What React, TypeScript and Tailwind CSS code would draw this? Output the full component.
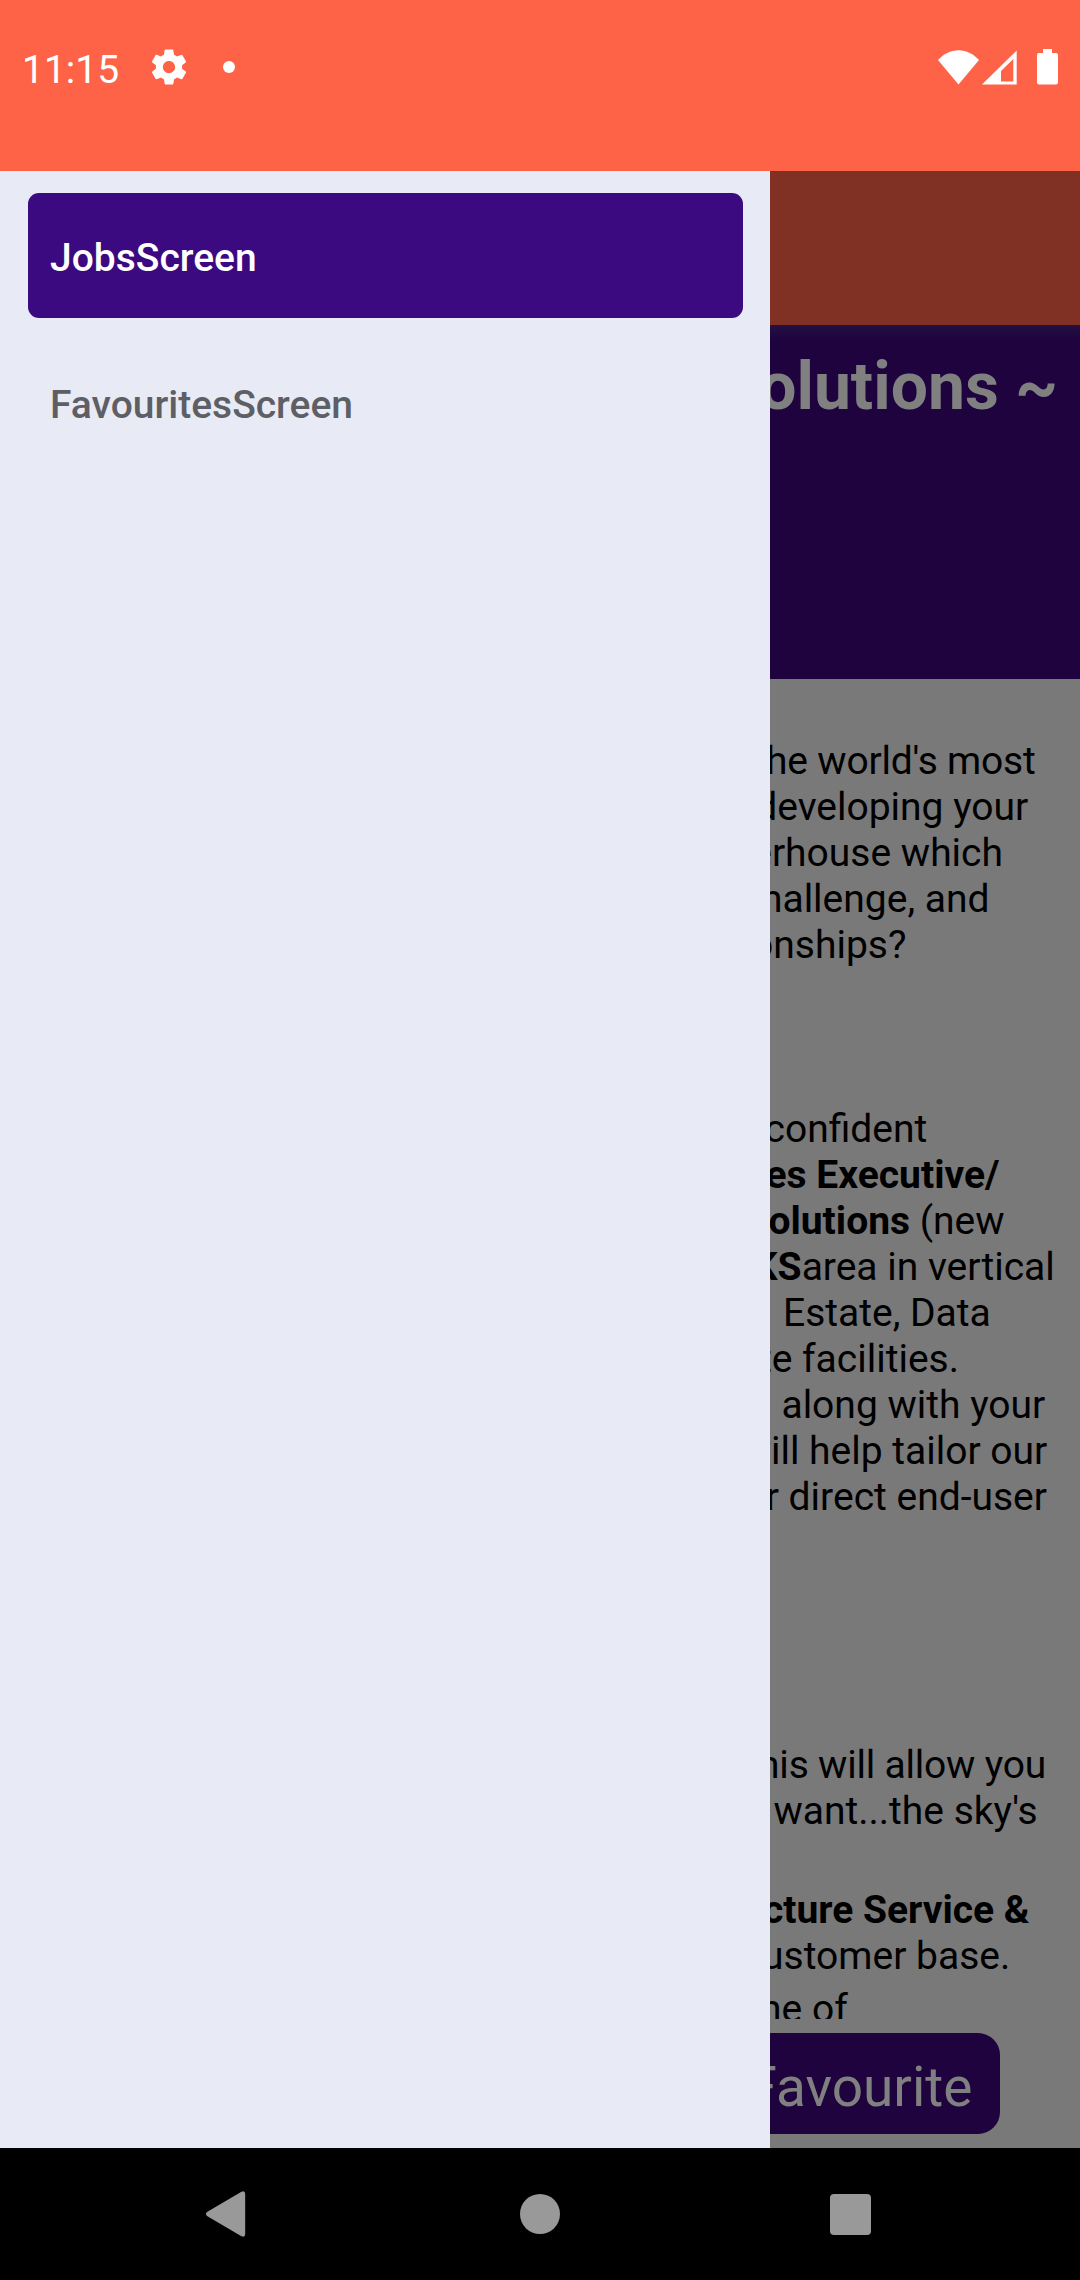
import type { ReactNode } from "react";

const GEAR =
  "M19.43 12.98c.04-.32.07-.64.07-.98s-.03-.66-.07-.98l2.11-1.65c.19-.15.24-.42.12-.64l-2-3.46c-.12-.22-.39-.3-.61-.22l-2.49 1c-.52-.4-1.08-.73-1.69-.98l-.38-2.65C14.46 2.18 14.25 2 14 2h-4c-.25 0-.46.18-.49.42l-.38 2.65c-.61.25-1.17.59-1.69.98l-2.49-1c-.23-.09-.49 0-.61.22l-2 3.46c-.13.22-.07.49.12.64l2.11 1.65c-.04.32-.07.65-.07.98s.03.66.07.98l-2.11 1.65c-.19.15-.24.42-.12.64l2 3.46c.12.22.39.3.61.22l2.49-1c.52.4 1.08.73 1.69.98l.38 2.65c.03.24.24.42.49.42h4c.25 0 .46-.18.49-.42l.38-2.65c.61-.25 1.17-.59 1.69-.98l2.49 1c.23.09.49 0 .61-.22l2-3.46c.12-.22.07-.49-.12-.64l-2.11-1.65zM12 15.5c-1.93 0-3.5-1.57-3.5-3.5s1.57-3.5 3.5-3.5 3.5 1.57 3.5 3.5-1.57 3.5-3.5 3.5z";

function StatusBar() {
  return (
    <header className="flex h-[171px] shrink-0 items-start bg-[#ff6347] text-white">
      <span className="ml-[22px] mt-[47px] w-[125.5px] whitespace-nowrap text-[39px] leading-[46px]">11:15</span>
      <svg className="mt-[46px] size-[42px]" viewBox="0 0 24 24" fill="currentColor">
        <path d={GEAR} />
      </svg>
      <span className="ml-[33.5px] mt-[61px] size-3 rounded-full bg-white" />
      <div className="ml-auto mr-[22px] mt-[49px] flex">
        <svg className="h-9 w-[41px]" viewBox="0 0 41 36" fill="currentColor">
          <path d="M0 11C5.500 5 12.500 1.200 20.500 1.200S35.500 5 41 11L20.500 35.600Z" />
        </svg>
        <svg className="ml-[3px] h-9 w-[35px]" viewBox="0 0 35 36" fill="currentColor" fillRule="evenodd">
          <path d="M0 35.500L34.700 1.500V35.500ZM19 22V32.400H31.300V10Z" />
        </svg>
        <svg className="ml-5 h-9 w-[21px]" viewBox="0 0 21 36" fill="currentColor">
          <path d="M6 0H15V4H19Q21 4 21 6V33.500Q21 35.500 19 35.500H2Q0 35.500 0 33.500V6Q0 4 2 4H6Z" />
        </svg>
      </div>
    </header>
  );
}

function Drawer() {
  return (
    <nav className="flex w-[770px] shrink-0 flex-col gap-[22px] bg-[#e8eaf6] px-7 pt-[22px] text-[39px] font-medium">
      <a className="flex h-[125px] w-[715px] items-center rounded-[11px] bg-[#3c0a80] pl-[22px] pt-[5px] text-white">
        JobsScreen
      </a>
      <a className="flex h-[125px] w-[715px] items-center rounded-[11px] pl-[22px] pt-[5px] text-[#5e5f64]">
        FavouritesScreen
      </a>
    </nav>
  );
}

function Line({ inset, tight = false, children }: { inset: number; tight?: boolean; children: ReactNode }) {
  return (
    <p
      className={`flex h-[46px] justify-end whitespace-pre ${tight ? "tracking-[-0.2px]" : ""}`}
      style={{ paddingRight: inset }}
    >
      {children}
    </p>
  );
}

function JobDetails() {
  return (
    <main className="flex min-w-0 flex-1 flex-col overflow-hidden bg-[#797979]">
      <div className="h-[154px] shrink-0 bg-[#803124]" />
      <div className="flex h-[354px] shrink-0 flex-col bg-[#1e033e]">
        <div className="h-4 shrink-0 bg-linear-to-b from-[#241043] to-[#1e033e]" />
        <h1 className="flex justify-end whitespace-nowrap pr-[22px] pt-[7px] text-[66px] font-bold leading-[78px] text-[#808080]">
          olutions ~
        </h1>
      </div>
      <div className="h-[1340px] shrink-0 overflow-hidden pt-[59px] text-[39px] leading-[46px] text-black">
        <div>
          <Line inset={44.4} tight>
            the world's most
          </Line>
          <Line inset={51.7}>developing your</Line>
          <Line inset={77}>erhouse which</Line>
          <Line inset={90.5}>challenge, and</Line>
          <Line inset={173.6}>onships?</Line>
        </div>
        <div className="mt-[138px]">
          <Line inset={152.7}>confident</Line>
          <Line inset={80.5}>
            <b>es Executive/</b>
          </Line>
          <Line inset={75.4}>
            <b>olutions</b> (new
          </Line>
          <Line inset={25.2}>
            <b>KS</b>area in vertical
          </Line>
          <Line inset={89.2}>Estate, Data</Line>
          <Line inset={121}>te facilities.</Line>
          <Line inset={34.7}>along with your</Line>
          <Line inset={32.7}>will help tailor our</Line>
          <Line inset={33}>r direct end-user</Line>
        </div>
        <div className="mt-[222px]">
          <Line inset={34} tight>
            his will allow you
          </Line>
          <Line inset={42.3}>want...the sky's</Line>
        </div>
        <div className="mt-[53px]">
          <Line inset={50.5}>
            <b>cture Service &amp;</b>
          </Line>
          <Line inset={69.7}>customer base.</Line>
        </div>
        <div className="mt-[7px]">
          <Line inset={232.3}>ne of</Line>
        </div>
      </div>
      <button className="mt-[14px] flex h-[101px] w-[230px] shrink-0 items-center justify-end rounded-r-[22px] bg-[#1e033e] pr-[27.5px] pt-[7px] text-[55px] leading-[64px] text-[#808080]">
        Favourite
      </button>
    </main>
  );
}

function NavigationBar() {
  return (
    <footer className="flex h-[132px] shrink-0 items-center justify-between bg-black pl-[206px] pr-[209px] text-[#999]">
      <svg className="h-[46px] w-10" viewBox="0 0 40 46" fill="currentColor">
        <path d="M1 21L35 1Q39 -1 39.200 3V43Q39 47 35 45L1 25Q-1 23 1 21Z" />
      </svg>
      <span className="ml-1 size-10 rounded-full bg-[#999]" />
      <span className="size-[41px] rounded-[4px] bg-[#999]" />
    </footer>
  );
}

export default function App() {
  return (
    <div className="flex h-[2280px] w-[1080px] flex-col overflow-hidden font-[Roboto,sans-serif]">
      <StatusBar />
      <div className="flex h-[1977px] shrink-0">
        <Drawer />
        <JobDetails />
      </div>
      <NavigationBar />
    </div>
  );
}
